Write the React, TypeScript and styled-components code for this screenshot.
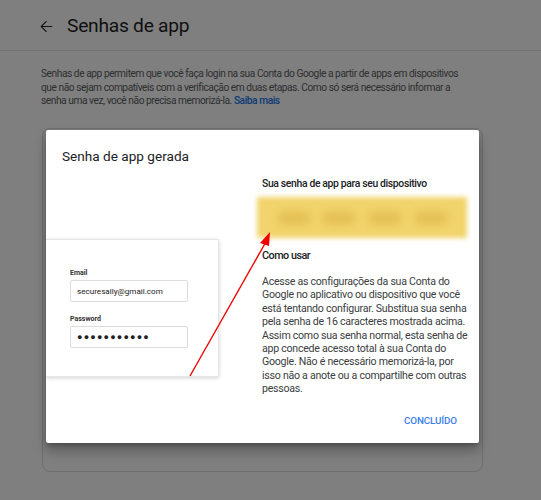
import React from "react";
import styled, { createGlobalStyle } from "styled-components";

const Global = createGlobalStyle`
  html, body { margin: 0; padding: 0; }
  body {
    background: #7f7f7f;
    font-family: Roboto, "Liberation Sans", Arial, sans-serif;
    width: 541px;
    height: 500px;
    overflow: hidden;
  }
`;

const Page = styled.div`
  position: relative;
  width: 541px;
  height: 500px;
  overflow: hidden;
`;

const Header = styled.header`
  display: flex;
  align-items: center;
  gap: 14px;
  height: 51px;
  padding: 0 0 0 40px;
  box-sizing: border-box;
  border-bottom: 1px solid #727272;
`;

const BackIcon = styled.svg`
  width: 13px;
  height: 13px;
  margin-top: 2px;
`;

const Title = styled.h1`
  margin: 0;
  font-size: 19.2px;
  font-weight: 400;
  color: #0f0f10;
  letter-spacing: -0.25px;
`;

const Intro = styled.p`
  margin: 16px 0 0 41px;
  width: 470px;
  white-space: nowrap;
  font-size: 10.2px;
  letter-spacing: -0.45px;
  line-height: 13.5px;
  color: #2c2e30;
`;

const Link = styled.a`
  color: #0c3a75;
  text-decoration: none;
  font-weight: 500;
`;

const BgCard = styled.div`
  margin: 20px 0 0 42px;
  width: 441px;
  height: 344px;
  border: 1px solid #6d6e70;
  border-radius: 8px;
  box-sizing: border-box;
`;

const Dialog = styled.div`
  position: absolute;
  left: 46px;
  top: 130px;
  width: 433px;
  height: 313px;
  background: #fff;
  border-radius: 2px;
  overflow: hidden;
  box-shadow: 0 8px 12px rgba(0, 0, 0, 0.28), 0 2px 4px rgba(0, 0, 0, 0.2);
  display: flex;
  flex-direction: column;
`;

const DialogTitle = styled.h2`
  margin: 16px 0 0 16px;
  font-size: 13.6px;
  line-height: 20px;
  font-weight: 400;
  color: #202124;
`;

const Body = styled.div`
  display: grid;
  grid-template-columns: 173px 1fr;
  column-gap: 38px;
  margin-top: 10px;
`;

const Illustration = styled.div`
  margin-top: 63px;
  height: 138px;
  background: #fff;
  border: 1px solid #e6e6e6;
  border-left: none;
  box-shadow: 0 1px 4px rgba(0, 0, 0, 0.18);
  padding: 28px 0 0 24px;
  box-sizing: border-box;
  display: flex;
  flex-direction: column;
`;

const FieldLabel = styled.label`
  font-size: 7px;
  font-weight: 700;
  color: #333;
  line-height: 10px;
`;

const FieldBox = styled.div<{ $dots?: boolean }>`
  margin-top: 2px;
  margin-bottom: 12px;
  width: 118px;
  height: 22px;
  border: 1px solid #dcdcdc;
  border-radius: 2px;
  box-sizing: border-box;
  display: flex;
  align-items: center;
  padding-left: 6px;
  font-size: ${(p) => (p.$dots ? "9px" : "8.1px")};
  letter-spacing: ${(p) => (p.$dots ? "1.2px" : "0")};
  color: #222;
`;

const Right = styled.div`
  display: flex;
  flex-direction: column;
  padding-right: 12px;
`;

const Caption = styled.div`
  padding-left: 5px;
  font-size: 10.4px;
  letter-spacing: -0.35px;
  line-height: 16px;
  font-weight: 500;
  color: #202124;
`;

const Secret = styled.div`
  margin-top: 5px;
  height: 41px;
  background: #f2d46c;
  filter: blur(2.5px);
  display: flex;
  align-items: center;
  justify-content: space-around;
  padding: 0 14px;
`;

const Blob = styled.span`
  width: 34px;
  height: 14px;
  border-radius: 7px;
  background: #e4c157;
  filter: blur(3px);
`;

const SubTitle = styled.div`
  margin-top: 10px;
  padding-left: 5px;
  font-size: 10.8px;
  letter-spacing: -0.5px;
  line-height: 16px;
  font-weight: 500;
  color: #202124;
`;

const Help = styled.p`
  margin: 11px 0 0 0;
  padding-left: 5px;
  white-space: nowrap;
  font-size: 10.6px;
  letter-spacing: -0.26px;
  line-height: 13.4px;
  color: #3a3d40;
`;

const Actions = styled.div`
  display: flex;
  justify-content: flex-end;
  margin-top: auto;
  padding: 0 22px 15px 0;
`;

const TextButton = styled.button`
  border: none;
  background: none;
  padding: 0;
  font-family: Roboto, "Liberation Sans", Arial, sans-serif;
  font-size: 9.8px;
  font-weight: 500;
  letter-spacing: -0.1px;
  color: #3b7ef0;
  line-height: 14px;
`;

const ArrowLayer = styled.svg`
  position: absolute;
  left: 0;
  top: 0;
  width: 433px;
  height: 313px;
  pointer-events: none;
`;

export default function App() {
  return (
    <Page>
      <Global />
      <Header>
        <BackIcon viewBox="0 0 16 16">
          <path d="M15 8H2M8 1.5L1.5 8L8 14.5" fill="none" stroke="#141414" strokeWidth="1.4" />
        </BackIcon>
        <Title>Senhas de app</Title>
      </Header>
      <Intro>
        Senhas de app permitem que você faça login na sua Conta do Google a partir de apps em dispositivos
        <br />
        que não sejam compatíveis com a verificação em duas etapas. Como só será necessário informar a
        <br />
        senha uma vez, você não precisa memorizá-la. <Link>Saiba mais</Link>
      </Intro>
      <BgCard />
      <Dialog>
        <DialogTitle>Senha de app gerada</DialogTitle>
        <Body>
          <Illustration>
            <FieldLabel>Email</FieldLabel>
            <FieldBox>securesally@gmail.com</FieldBox>
            <FieldLabel>Password</FieldLabel>
            <FieldBox $dots>●●●●●●●●●●●</FieldBox>
          </Illustration>
          <Right>
            <Caption>Sua senha de app para seu dispositivo</Caption>
            <Secret>
              <Blob />
              <Blob />
              <Blob />
              <Blob />
            </Secret>
            <SubTitle>Como usar</SubTitle>
            <Help>
              Acesse as configurações da sua Conta do
              <br />
              Google no aplicativo ou dispositivo que você
              <br />
              está tentando configurar. Substitua sua senha
              <br />
              pela senha de 16 caracteres mostrada acima.
              <br />
              Assim como sua senha normal, esta senha de
              <br />
              app concede acesso total à sua Conta do
              <br />
              Google. Não é necessário memorizá-la, por
              <br />
              isso não a anote ou a compartilhe com outras
              <br />
              pessoas.
            </Help>
          </Right>
        </Body>
        <Actions>
          <TextButton>CONCLUÍDO</TextButton>
        </Actions>
        <ArrowLayer viewBox="0 0 433 313">
          <line x1="144" y1="246" x2="221" y2="110" stroke="#f00000" strokeWidth="1.4" />
          <polygon points="224,102 214,113 223,116" fill="#f00000" />
        </ArrowLayer>
      </Dialog>
    </Page>
  );
}
